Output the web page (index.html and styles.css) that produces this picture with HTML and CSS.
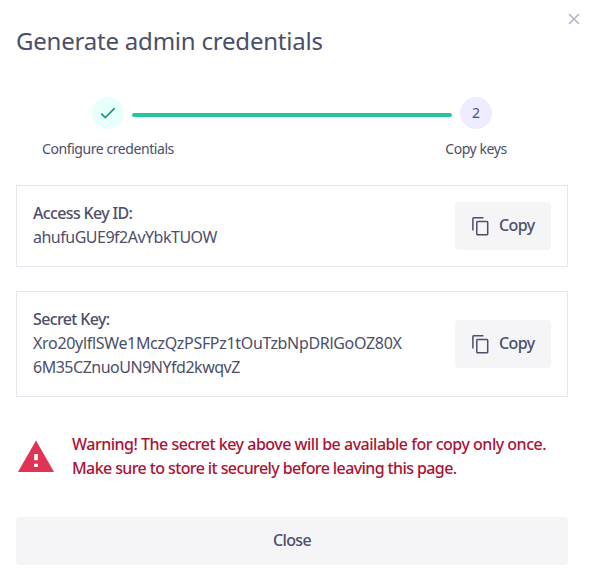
FILE: index.html
```html
<!DOCTYPE html>
<html lang="en">
<head>
<meta charset="utf-8">
<title>Generate admin credentials</title>
<link rel="stylesheet" href="styles.css">
</head>
<body>
<main class="dialog">
  <button class="dismiss" aria-label="Dismiss"><svg width="12" height="12" viewBox="0 0 12 12"><path d="M1 1l10 10M11 1L1 11"/></svg></button>
  <h1 class="title"><span class="t-title">Generate admin credentials</span></h1>
  <div class="stepper">
    <div class="step">
      <span class="dot done"><svg width="16" height="12" viewBox="0 0 16 12"><path d="M1.3 6.6l4 4L14.7 1.2"/></svg></span>
      <span class="label">Configure credentials</span>
    </div>
    <div class="line"></div>
    <div class="step">
      <span class="dot current">2</span>
      <span class="label">Copy keys</span>
    </div>
  </div>
  <section class="card">
    <div class="info">
      <div class="name"><span class="t-access">Access Key ID:</span></div>
      <div><span class="t-id">ahufuGUE9f2AvYbkTUOW</span></div>
    </div>
    <button class="copy"><svg width="20" height="20" viewBox="0 0 20 20"><path d="M1.9 14.5V2.6Q1.9 1.8 2.7 1.8H12.5"/><rect x="5.8" y="5.4" width="10.9" height="13.3" rx=".8"/></svg><span class="t-copy">Copy</span></button>
  </section>
  <section class="card">
    <div class="info">
      <div class="name"><span class="t-secret">Secret Key:</span></div>
      <div><span class="t-s1">Xro20ylflSWe1MczQzPSFPz1tOuTzbNpDRlGoOZ80X</span></div>
      <div><span class="t-s2">6M35CZnuoUN9NYfd2kwqvZ</span></div>
    </div>
    <button class="copy"><svg width="20" height="20" viewBox="0 0 20 20"><path d="M1.9 14.5V2.6Q1.9 1.8 2.7 1.8H12.5"/><rect x="5.8" y="5.4" width="10.9" height="13.3" rx=".8"/></svg><span class="t-copy">Copy</span></button>
  </section>
  <div class="warning">
    <svg width="36" height="32" viewBox="0 0 36 32"><path class="tri" d="M18 .5L36 32H0z"/><path class="mark" d="M16.2 14h3.6v6.2h-3.6zM16.2 23.7h3.6v3.2h-3.6z"/></svg>
    <div class="message">
      <div><span class="t-w1">Warning! The secret key above will be available for copy only once.</span></div>
      <div><span class="t-w2">Make sure to store it securely before leaving this page.</span></div>
    </div>
  </div>
  <button class="close"><span class="t-close">Close</span></button>
</main>
</body>
</html>
```
FILE: styles.css
```css
* { box-sizing: border-box; }
body { margin: 0; background: #fff; color: #4b4f69; font: 16px/24px "Noto Sans", sans-serif; }
button { border: 0; margin: 0; padding: 0; font: inherit; font-weight: 500; color: inherit; background: #f5f5f8; border-radius: 4px; }
span { white-space: nowrap; }
svg { display: block; flex: none; fill: none; }
.dialog { position: relative; width: 584px; height: 587px; padding: 24px 16px 22px; }
.dismiss { position: absolute; top: 13px; right: 4px; background: none; }
.dismiss svg { stroke: #b3b5c6; stroke-width: 1.6; }
.title { margin: 0; font-size: 24px; line-height: 34px; font-weight: 400; }
.stepper { display: flex; justify-content: space-between; margin-top: 39px; padding: 0 26px 0 24px; height: 64px; }
.step { display: flex; flex-direction: column; align-items: center; gap: 8px; width: 136px; font-size: 14px; }
.step:last-child { margin: 0 -2px 0 0; }
.dot { display: flex; align-items: center; justify-content: center; width: 32px; height: 32px; border-radius: 50%; }
.done { background: #e8fffc; }
.done svg { stroke: #159a7c; stroke-width: 1.7; }
.current { background: #eeedff; }
.line { flex: 1; height: 4px; margin: 16px -44px 0; border-radius: 2px; background: #24c6a2; }
.card { display: flex; align-items: center; justify-content: space-between; height: 82px; margin-top: 24px; padding: 15px 16px 17px; border: 1px solid #e5e6ee; }
.card + .card { height: 106px; }
.card .copy { margin-top: 2px; }
.name { font-weight: 500; }
.copy { display: flex; align-items: center; gap: 8px; width: 96px; height: 48px; padding: 0 0 2px 16px; }
.copy svg { stroke: #4b4f69; stroke-width: 1.5; margin-top: 2px; }
.warning { display: flex; align-items: center; gap: 18px; margin-top: 35px; padding-left: 2px; color: #ac1234; font-weight: 500; }
.tri { fill: #df3454; }
.mark { fill: #fff; }
.close { display: block; width: 100%; height: 48px; margin-top: 37px; padding-bottom: 2px; }

/* Tracking per text */
.t-title { letter-spacing: -.21px; }
.label { letter-spacing: -.43px; }
.t-access, .t-secret { letter-spacing: -.65px; }
.t-id { letter-spacing: -.5px; }
.t-s1 { letter-spacing: -.32px; }
.t-s2 { letter-spacing: -.49px; }
.t-copy, .t-close { letter-spacing: -.6px; }
.t-w1 { letter-spacing: -.49px; }
.t-w2 { letter-spacing: -.6px; }
```
